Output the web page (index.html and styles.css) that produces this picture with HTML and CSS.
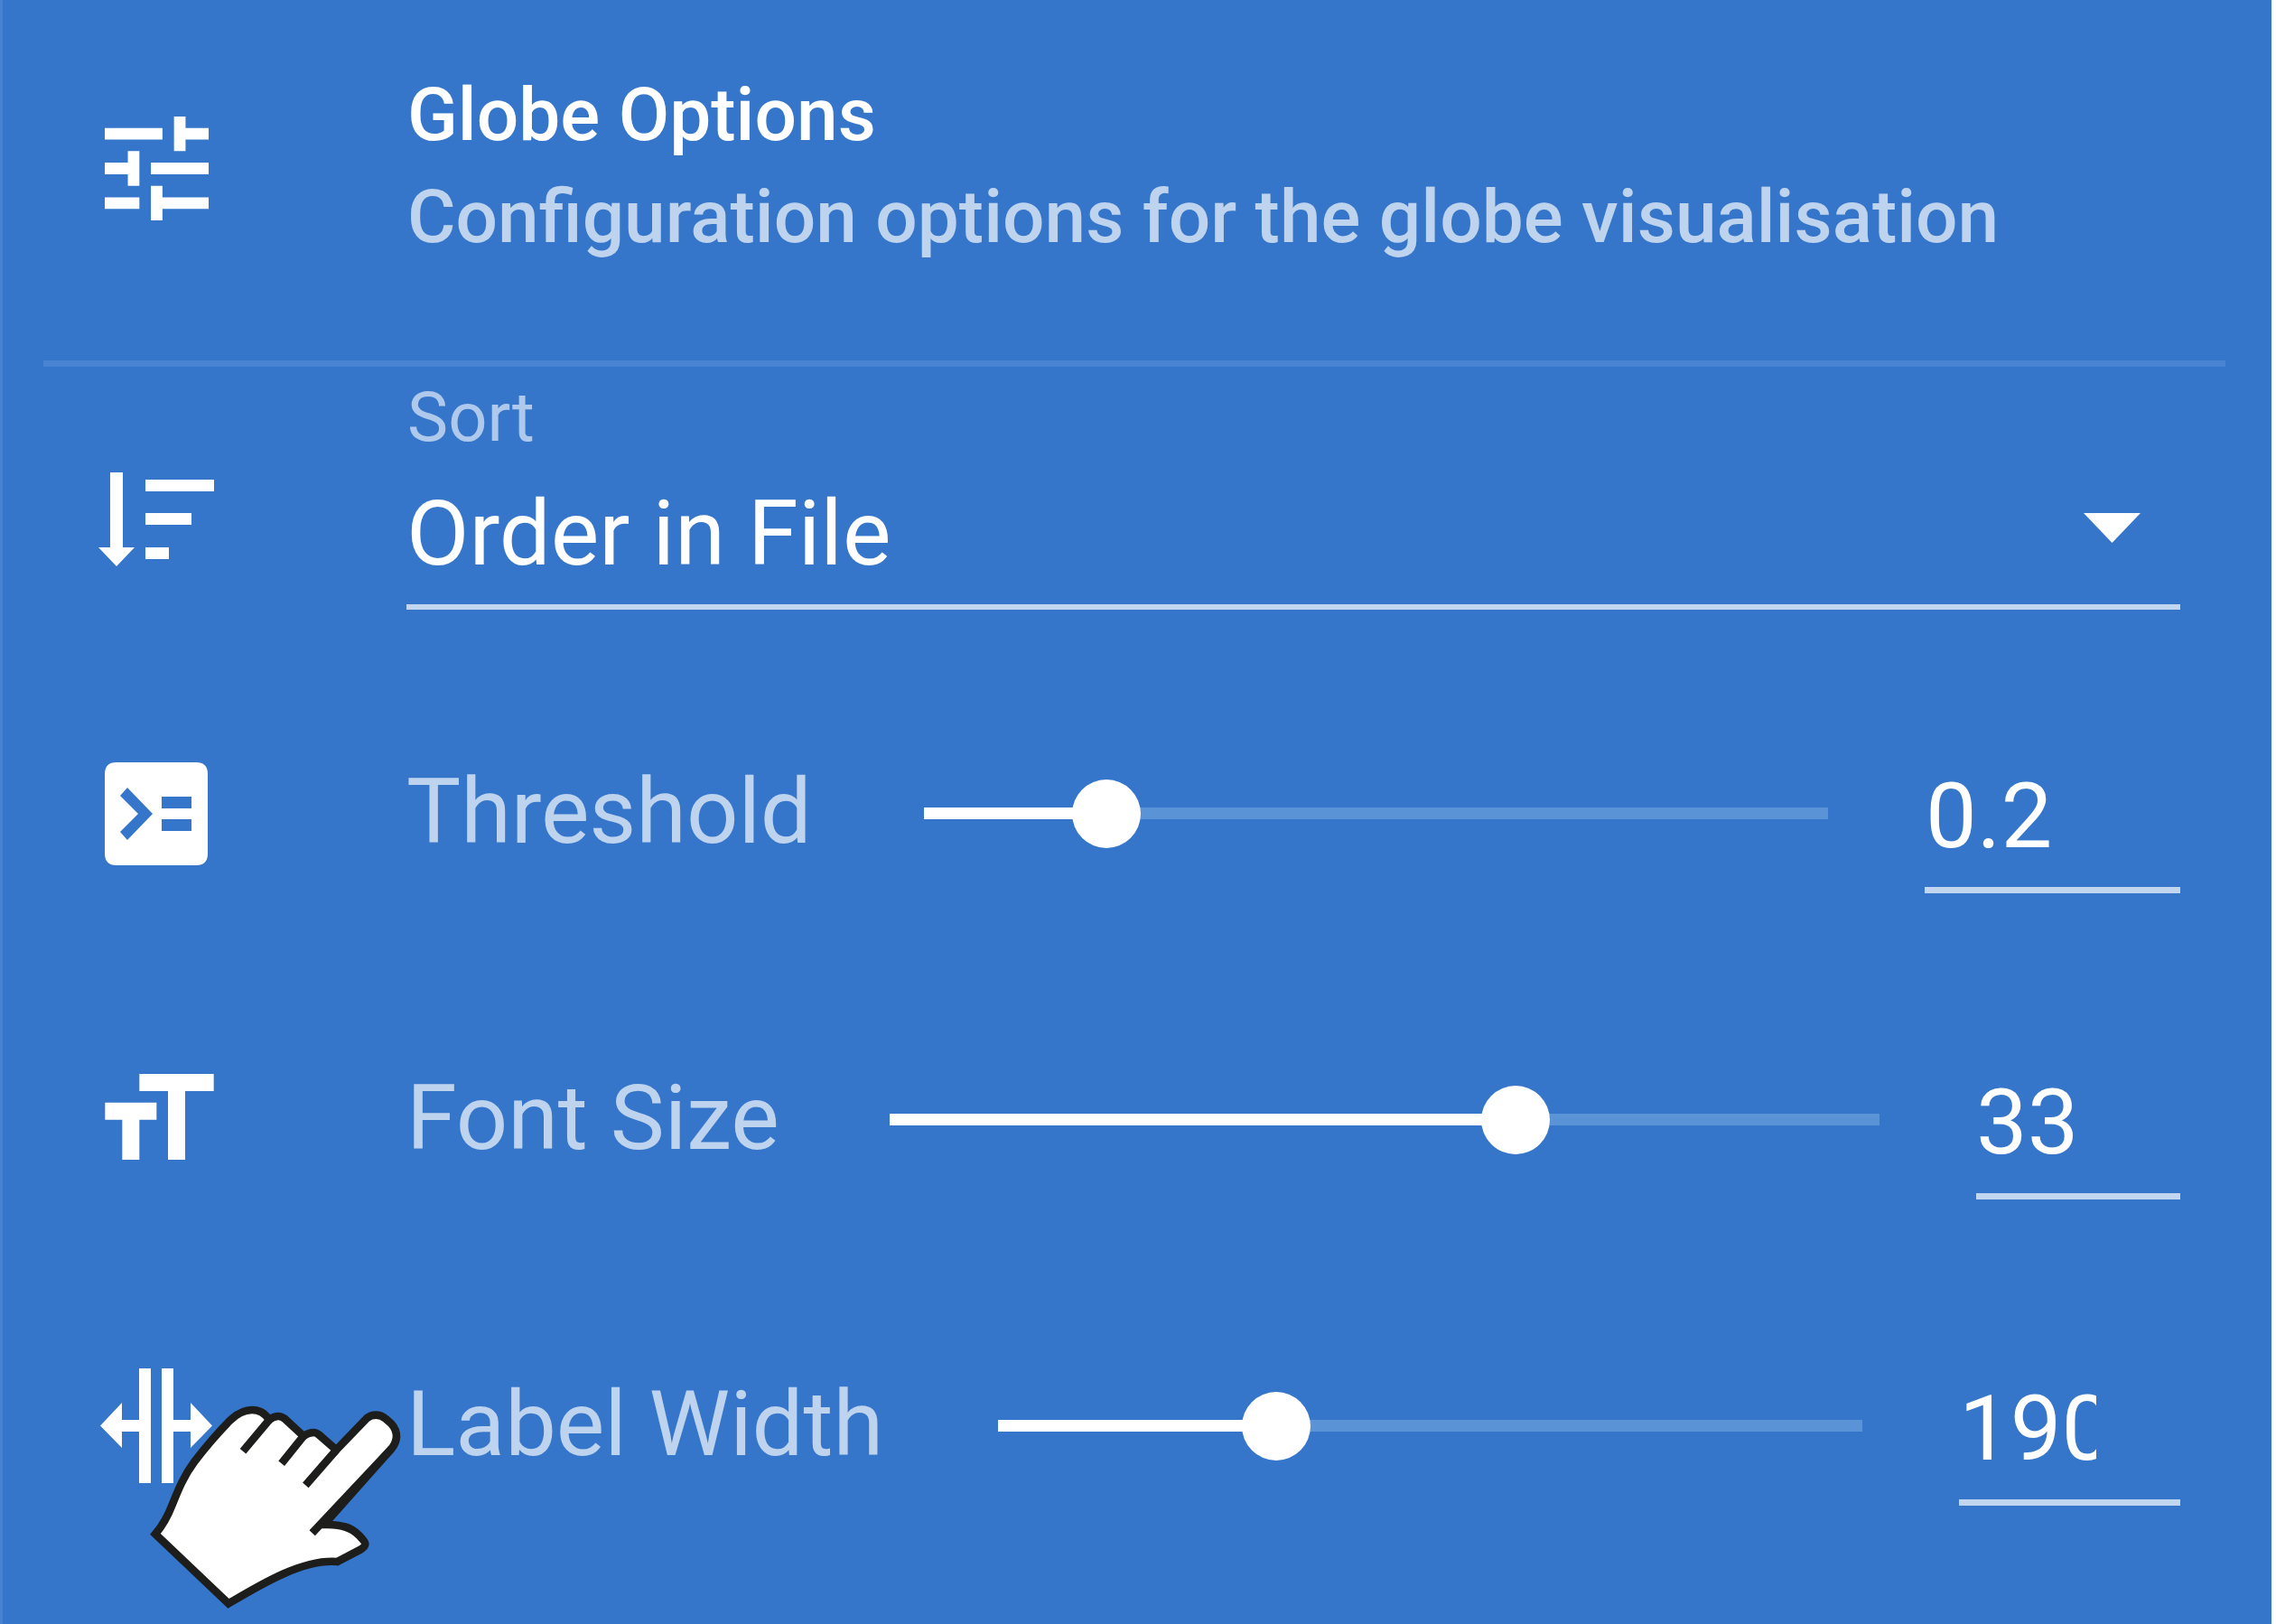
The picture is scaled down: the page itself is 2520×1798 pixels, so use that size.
FILE: index.html
```html
<!DOCTYPE html>
<html lang="en">
<head>
<meta charset="utf-8">
<title>Globe Options</title>
<link rel="stylesheet" href="styles.css">
</head>
<body>
<main class="panel">
  <header class="header">
    <svg class="icon icon-tune" viewBox="3 3 18 18"><path d="M3 17v2h6v-2H3zM3 5v2h10V5H3zm10 16v-2h8v-2h-8v-2h-2v6h2zM7 9v2H3v2h4v2h2V9H7zm14 4v-2H11v2h10zm-6-4h2V7h4V5h-4V3h-2v6z"/></svg>
    <div class="heading">
      <h1 class="title">Globe Options</h1>
      <p class="subtitle">Configuration options for the globe visualisation</p>
    </div>
  </header>

  <section class="row-sort">
    <svg class="icon icon-sort" viewBox="0 0 128 104"><path d="M13 0h14v83h13L20 104 0 83h13zM52 8h76v13H52zM52 45h51v13H52zM52 83h26v13H52z"/></svg>
    <div class="select">
      <span class="select-label">Sort</span>
      <div class="select-value"><span>Order in File</span><svg class="caret" viewBox="0 0 10 5" preserveAspectRatio="none"><path d="M0 0h10L5 5z"/></svg></div>
    </div>
  </section>

  <section class="row">
    <svg class="icon icon-threshold" viewBox="0 0 114 114"><path fill-rule="evenodd" d="M13 0h88q13 0 13 13v88q0 13-13 13H13Q0 114 0 101V13Q0 0 13 0zM17 37l20 20-20 20 8 9 28-29-28-29zM63 38v13h33V38zM63 63v13h33V63z"/></svg>
    <span class="label">Threshold</span>
    <div class="slider slider-threshold"><div class="fill" style="width:20.2%"></div><div class="thumb"></div></div>
    <div class="number number-threshold"><span class="digits">0.2</span></div>
  </section>

  <section class="row">
    <svg class="icon icon-size" viewBox="3 4 19 15"><path d="M9 4v3h5v12h3V7h5V4H9zm-6 8h3v7h3v-7h3V9H3v3z"/></svg>
    <span class="label">Font Size</span>
    <div class="slider slider-font"><div class="fill" style="width:63.2%"></div><div class="thumb"></div></div>
    <div class="number number-font"><span class="digits">33</span></div>
  </section>

  <section class="row">
    <svg class="icon icon-width" viewBox="0 0 126 127"><path d="M44 0h13v127H44V70H25v18L1 63.500 25 38v19h19zM69 0h13v57h19V38l24 25.500L101 88V70H82v57H69z"/></svg>
    <span class="label">Label Width</span>
    <div class="slider slider-width"><div class="fill" style="width:32.2%"></div><div class="thumb"></div></div>
    <div class="number number-width"><span class="digits">190</span></div>
  </section>

  <svg class="hand" viewBox="0 0 1440 924">
    <path class="skin" d="M276 625C300 597 316 570 332 528C350 484 368 436 405 386C440 340 480 293 522 250C548 224 574 213 597 213C622 213 637 223 655 245C665 238 674 234 684 234C692 234 699 237 707 243L768 300C779 292 790 288 803 288C809 288 814 291 820 296L877 346L979 240C988 233 997 230 1009 230C1020 230 1031 234 1042 243L1060 259C1070 270 1077 287 1077 302C1076 316 1071 329 1061 341L836 594H850C892 595 925 601 953 630C966 644 973 650 973 658C973 666 967 671 957 677L880 717C770 708 638 785 519 856Z"/>
    <path class="crease" d="M655 245L567 350M768 300L695 391M877 346L775 463M1061 341L797 622"/>
  </svg>
</main>
</body>
</html>
```
FILE: styles.css
```css
* {
  box-sizing: border-box;
}

body {
  margin: 0;
  background: #fff;
  font-family: Roboto, "Liberation Sans", sans-serif;
  color: #fff;
}

.panel {
  position: relative;
  width: 2515px;
  height: 1798px;
  overflow: hidden;
  background: #3576cb;
  border-left: 3px solid #4682d1;
}

.header {
  display: flex;
  height: 406px;
  margin: 0 51px 0 45px;
  padding: 71px 0 0 68px;
  border-bottom: 7px solid #4983d1;
}

.icon {
  flex: none;
  fill: #fff;
}

.icon-tune {
  width: 115px;
  height: 115px;
  margin: 58px 220px 0 0;
}

.heading {
  white-space: nowrap;
}

.title,
.subtitle {
  margin: 0;
  font-size: 82px;
  font-weight: 500;
  line-height: 113px;
}

.subtitle {
  color: #bdd3ee;
}

.row-sort {
  display: flex;
  height: 325px;
  padding: 11px 101px 0 106px;
}

.icon-sort {
  width: 128px;
  height: 104px;
  margin: 106px 213px 0 0;
}

.select {
  display: flex;
  flex: 1;
  flex-direction: column;
  height: 258px;
  border-bottom: 6px solid #c2d6ef;
}

.select-label {
  margin-bottom: 24px;
  padding-left: 1px;
  font-size: 76px;
  line-height: 90px;
  color: #aec9eb;
}

.select-value {
  display: flex;
  align-items: center;
  justify-content: space-between;
  font-size: 101px;
  line-height: 120px;
}

.caret {
  width: 63px;
  height: 33px;
  margin: 0 44px 14px 0;
  fill: #fff;
}

.row {
  display: flex;
  align-items: center;
  height: 339px;
  padding: 0 101px 0 113px;
}

.icon-threshold {
  width: 114px;
  height: 114px;
  margin: 1px 220px 0 0;
}

.icon-size {
  width: 121px;
  height: 95px;
  margin: 0 213px 6px 0;
}

.icon-width {
  width: 126px;
  height: 127px;
  margin: 0 214px 0 -6px;
}

.label {
  flex: 1;
  padding-bottom: 3px;
  font-size: 101px;
  line-height: 120px;
  letter-spacing: -0.1px;
  white-space: nowrap;
  color: #bdd3ee;
}

.slider {
  display: flex;
  flex: none;
  align-items: center;
  height: 13px;
  background: #5b93d7;
}

.fill {
  height: 13px;
  background: #fff;
}

.thumb {
  flex: none;
  width: 76px;
  height: 76px;
  margin-left: -38px;
  border-radius: 50%;
  background: #fff;
}

.slider-threshold {
  width: 1001px;
  margin-right: 107px;
}

.slider-font {
  width: 1096px;
  margin-right: 107px;
}

.slider-width {
  width: 957px;
  margin-right: 107px;
}

.number {
  flex: none;
  height: 145px;
  margin-top: 32px;
  font-size: 101px;
  line-height: 120px;
  border-bottom: 7px solid #c2d6ef;
}

.digits {
  display: block;
  overflow: hidden;
}

.number-threshold {
  width: 283px;
}

.number-threshold .digits {
  padding-left: 1px;
}

.number-font {
  width: 226px;
}

.number-width {
  width: 245px;
}

.number-width .digits {
  width: 152px;
}

/* Pointing hand laid over the last row */
.hand {
  position: absolute;
  left: 77px;
  top: 1490px;
  width: 480px;
  height: 308px;
  stroke: #1d1e1c;
  stroke-width: 26;
}

.skin {
  fill: #fff;
}

.crease {
  fill: none;
}
```
